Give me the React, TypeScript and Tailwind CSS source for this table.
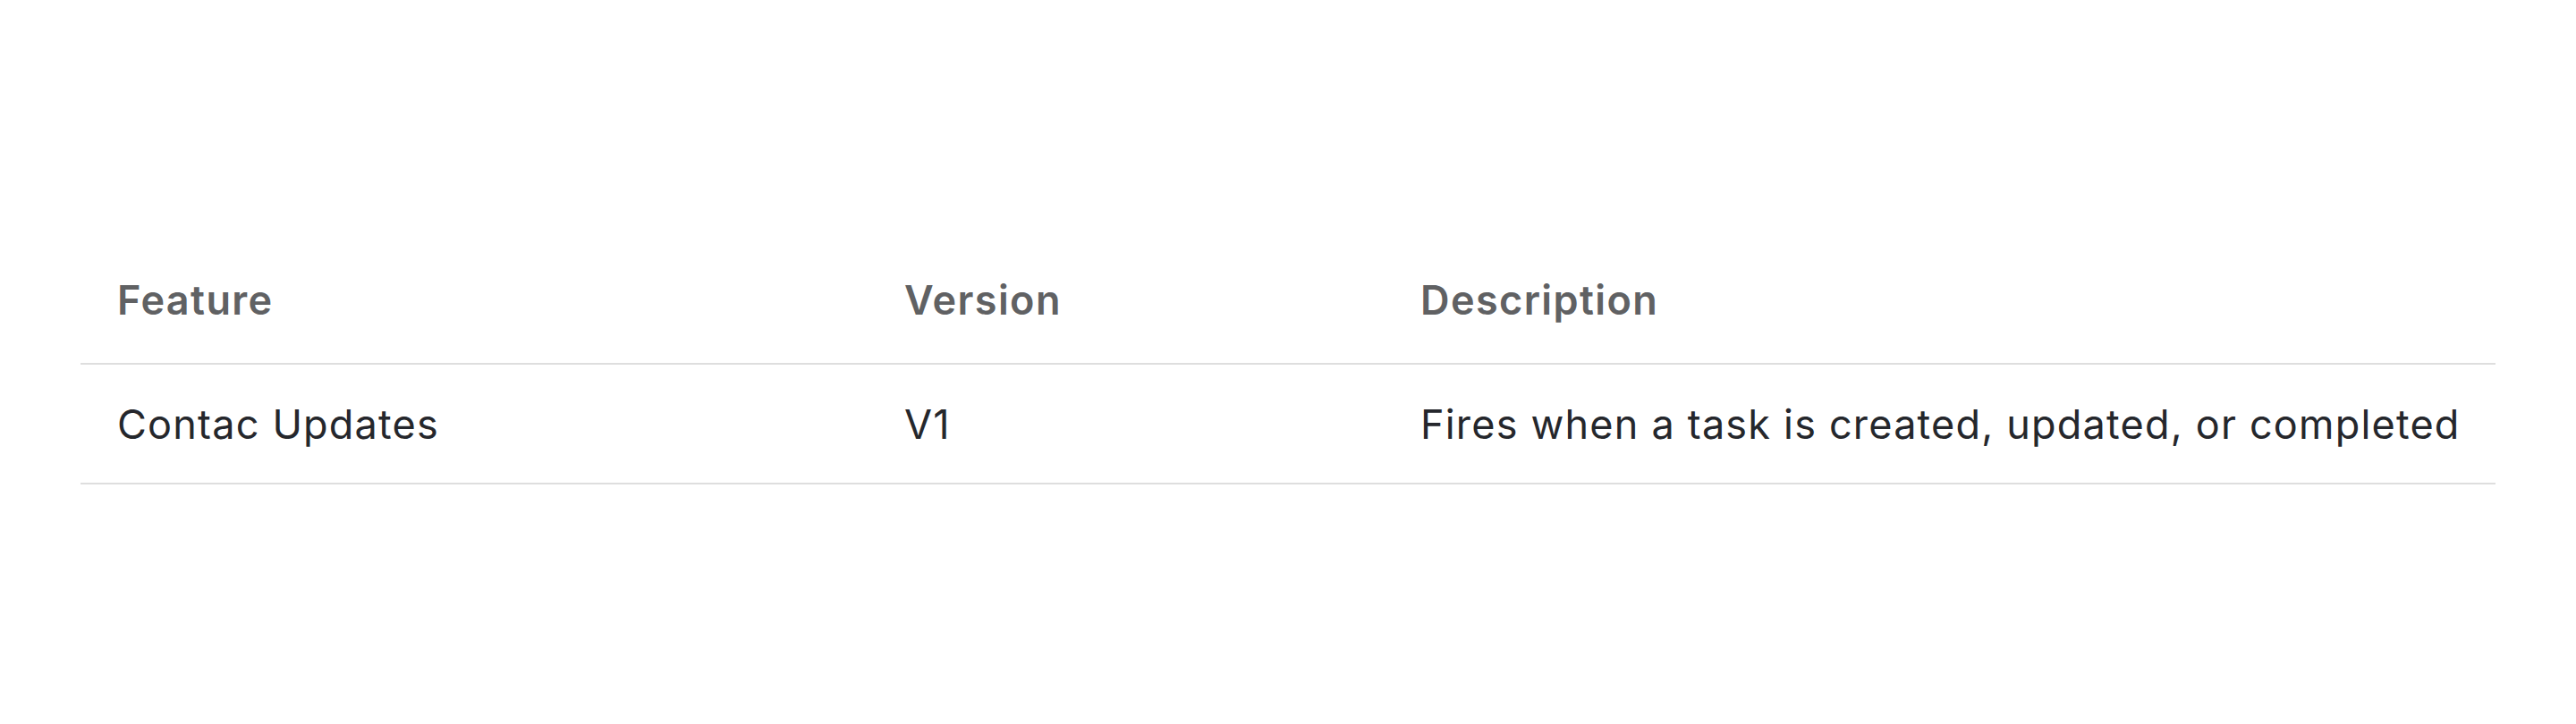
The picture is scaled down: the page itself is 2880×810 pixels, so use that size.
const rows = [
  {
    feature: "Contac Updates",
    version: "V1",
    description: "Fires when a task is created, updated, or completed",
  },
];

export default function App() {
  return (
    <div className="min-h-screen w-full bg-white px-[90px] pt-[272px] font-['Inter','Liberation_Sans',sans-serif]">
      <table className="w-full table-fixed border-collapse text-left whitespace-nowrap">
        <colgroup>
          <col className="w-[880px]" />
          <col className="w-[577px]" />
          <col />
        </colgroup>
        <thead>
          <tr className="border-b-2 border-[#dedede]">
            <th className="px-[41px] pt-[31px] pb-[37px] text-[45px] leading-[66px] tracking-[1.4px] font-semibold text-[#606163]">Feature</th>
            <th className="px-[41px] pt-[31px] pb-[37px] text-[45px] leading-[66px] tracking-[1.4px] font-semibold text-[#606163]">Version</th>
            <th className="px-[41px] pt-[31px] pb-[37px] text-[45px] leading-[66px] tracking-[1.4px] font-semibold text-[#606163]">Description</th>
          </tr>
        </thead>
        <tbody>
          {rows.map((r) => (
            <tr key={r.feature} className="border-b-2 border-[#dedede]">
              <td className="px-[41px] pt-[34px] pb-[32px] text-[45px] leading-[66px] tracking-[1.2px] text-[#25272c]">{r.feature}</td>
              <td className="px-[41px] pt-[34px] pb-[32px] text-[45px] leading-[66px] tracking-[1.2px] text-[#25272c]">{r.version}</td>
              <td className="px-[41px] pt-[34px] pb-[32px] text-[45px] leading-[66px] tracking-[1.2px] text-[#25272c]">{r.description}</td>
            </tr>
          ))}
        </tbody>
      </table>
    </div>
  );
}
